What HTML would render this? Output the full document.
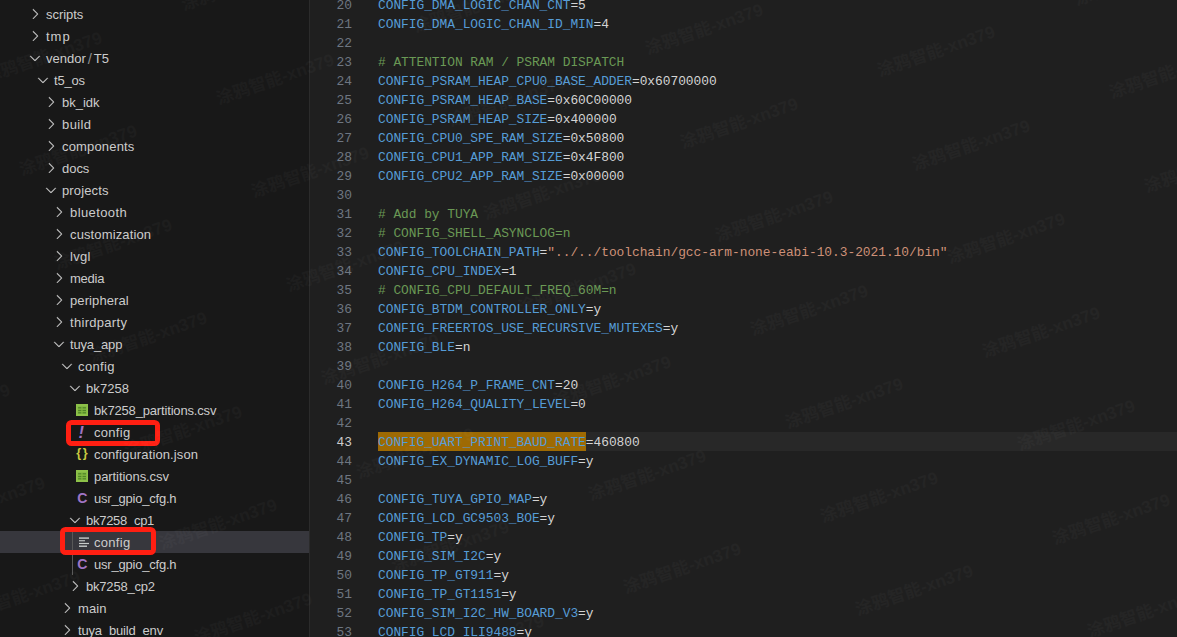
<!DOCTYPE html><html><head><meta charset="utf-8"><title>config</title><style>
html,body{margin:0;padding:0;background:#1f1f1f;}
body{width:1177px;height:637px;overflow:hidden;position:relative;font-family:"Liberation Sans","Noto Sans CJK SC",sans-serif;}
#sb{position:absolute;left:0;top:0;width:309px;height:637px;background:#181818;border-right:1px solid #2b2b2b;overflow:hidden;}
.row{position:absolute;left:0;width:309px;height:22px;line-height:22px;color:#cccccc;font-size:13px;white-space:nowrap;}
.row.sel{background:#37373d;}
.row .lbl{position:absolute;top:1px;}
.row svg{position:absolute;}
.sep{color:#8b8b8b;margin:0 1.9px;font-size:15px;line-height:1;position:relative;top:0.5px;}
#ed{position:absolute;left:310px;top:0;width:867px;height:637px;background:#1f1f1f;overflow:hidden;}
.ln{position:absolute;left:0;width:867px;height:19px;line-height:19px;font-family:"Liberation Mono","DejaVu Sans Mono",monospace;font-size:12.9px;letter-spacing:-0.040px;white-space:pre;color:#d4d4d4;}
.ln.cur{background:linear-gradient(#282828,#282828) no-repeat 68px 0;}
.ln .n{position:absolute;left:0;top:1px;width:42px;text-align:right;color:#6e7681;}
.ln.cur .n{color:#cccccc;}
.ln .t{position:absolute;left:68px;top:1px;height:19px;}
.k{color:#569cd6;} .c{color:#6a9955;} .s{color:#ce9178;} .v{color:#d4d4d4;}
.kh{color:#569cd6;position:relative;}
.hl{position:absolute;left:68px;top:0;width:208px;height:19px;background:#9e6a03;}
.box{position:absolute;border:5.6px solid #ff1f12;border-radius:5.5px;box-sizing:border-box;}
.guide{position:absolute;width:1px;background:#585858;}
.wm{position:absolute;width:200px;height:24px;line-height:24px;text-align:center;color:#ffffff;opacity:0.024;font-size:17.2px;font-weight:bold;white-space:nowrap;transform:rotate(-19deg);transform-origin:center;pointer-events:none;font-family:"Liberation Sans","Noto Sans CJK SC",sans-serif;}
</style></head><body>
<div id="sb">
<div class="row" style="top:3px"><svg style="left:27px;top:3px" width="16" height="16" viewBox="0 0 16 16"><path d="M10.072 8.024L5.715 3.667l.618-.62L11 7.716v.618L6.333 13l-.618-.619 4.357-4.357z" fill="#d0d0d0" stroke="#d0d0d0" stroke-width="0.2"/></svg><span class="lbl" style="left:46px;letter-spacing:-0.033px">scripts</span></div>
<div class="row" style="top:25px"><svg style="left:27px;top:3px" width="16" height="16" viewBox="0 0 16 16"><path d="M10.072 8.024L5.715 3.667l.618-.62L11 7.716v.618L6.333 13l-.618-.619 4.357-4.357z" fill="#d0d0d0" stroke="#d0d0d0" stroke-width="0.2"/></svg><span class="lbl" style="left:46px;letter-spacing:1.000px">tmp</span></div>
<div class="row" style="top:47px"><svg style="left:27px;top:3px" width="16" height="16" viewBox="0 0 16 16"><path d="M7.976 10.072l4.357-4.357.62.618L8.284 11h-.618L3 6.333l.619-.618 4.357 4.357z" fill="#d0d0d0" stroke="#d0d0d0" stroke-width="0.2"/></svg><span class="lbl" style="left:46px">vendor<span class="sep">/</span>T5</span></div>
<div class="row" style="top:69px"><svg style="left:35px;top:3px" width="16" height="16" viewBox="0 0 16 16"><path d="M7.976 10.072l4.357-4.357.62.618L8.284 11h-.618L3 6.333l.619-.618 4.357 4.357z" fill="#d0d0d0" stroke="#d0d0d0" stroke-width="0.2"/></svg><span class="lbl" style="left:54px;letter-spacing:-0.225px">t5_os</span></div>
<div class="row" style="top:91px"><svg style="left:43px;top:3px" width="16" height="16" viewBox="0 0 16 16"><path d="M10.072 8.024L5.715 3.667l.618-.62L11 7.716v.618L6.333 13l-.618-.619 4.357-4.357z" fill="#d0d0d0" stroke="#d0d0d0" stroke-width="0.2"/></svg><span class="lbl" style="left:62px">bk_idk</span></div>
<div class="row" style="top:113px"><svg style="left:43px;top:3px" width="16" height="16" viewBox="0 0 16 16"><path d="M10.072 8.024L5.715 3.667l.618-.62L11 7.716v.618L6.333 13l-.618-.619 4.357-4.357z" fill="#d0d0d0" stroke="#d0d0d0" stroke-width="0.2"/></svg><span class="lbl" style="left:62px;letter-spacing:0.400px">build</span></div>
<div class="row" style="top:135px"><svg style="left:43px;top:3px" width="16" height="16" viewBox="0 0 16 16"><path d="M10.072 8.024L5.715 3.667l.618-.62L11 7.716v.618L6.333 13l-.618-.619 4.357-4.357z" fill="#d0d0d0" stroke="#d0d0d0" stroke-width="0.2"/></svg><span class="lbl" style="left:62px;letter-spacing:0.167px">components</span></div>
<div class="row" style="top:157px"><svg style="left:43px;top:3px" width="16" height="16" viewBox="0 0 16 16"><path d="M10.072 8.024L5.715 3.667l.618-.62L11 7.716v.618L6.333 13l-.618-.619 4.357-4.357z" fill="#d0d0d0" stroke="#d0d0d0" stroke-width="0.2"/></svg><span class="lbl" style="left:62px;letter-spacing:-0.033px">docs</span></div>
<div class="row" style="top:179px"><svg style="left:43px;top:3px" width="16" height="16" viewBox="0 0 16 16"><path d="M7.976 10.072l4.357-4.357.62.618L8.284 11h-.618L3 6.333l.619-.618 4.357 4.357z" fill="#d0d0d0" stroke="#d0d0d0" stroke-width="0.2"/></svg><span class="lbl" style="left:62px;letter-spacing:0.143px">projects</span></div>
<div class="row" style="top:201px"><svg style="left:51px;top:3px" width="16" height="16" viewBox="0 0 16 16"><path d="M10.072 8.024L5.715 3.667l.618-.62L11 7.716v.618L6.333 13l-.618-.619 4.357-4.357z" fill="#d0d0d0" stroke="#d0d0d0" stroke-width="0.2"/></svg><span class="lbl" style="left:70px;letter-spacing:0.400px">bluetooth</span></div>
<div class="row" style="top:223px"><svg style="left:51px;top:3px" width="16" height="16" viewBox="0 0 16 16"><path d="M10.072 8.024L5.715 3.667l.618-.62L11 7.716v.618L6.333 13l-.618-.619 4.357-4.357z" fill="#d0d0d0" stroke="#d0d0d0" stroke-width="0.2"/></svg><span class="lbl" style="left:70px;letter-spacing:0.125px">customization</span></div>
<div class="row" style="top:245px"><svg style="left:51px;top:3px" width="16" height="16" viewBox="0 0 16 16"><path d="M10.072 8.024L5.715 3.667l.618-.62L11 7.716v.618L6.333 13l-.618-.619 4.357-4.357z" fill="#d0d0d0" stroke="#d0d0d0" stroke-width="0.2"/></svg><span class="lbl" style="left:70px;letter-spacing:0.267px">lvgl</span></div>
<div class="row" style="top:267px"><svg style="left:51px;top:3px" width="16" height="16" viewBox="0 0 16 16"><path d="M10.072 8.024L5.715 3.667l.618-.62L11 7.716v.618L6.333 13l-.618-.619 4.357-4.357z" fill="#d0d0d0" stroke="#d0d0d0" stroke-width="0.2"/></svg><span class="lbl" style="left:70px;letter-spacing:-0.250px">media</span></div>
<div class="row" style="top:289px"><svg style="left:51px;top:3px" width="16" height="16" viewBox="0 0 16 16"><path d="M10.072 8.024L5.715 3.667l.618-.62L11 7.716v.618L6.333 13l-.618-.619 4.357-4.357z" fill="#d0d0d0" stroke="#d0d0d0" stroke-width="0.2"/></svg><span class="lbl" style="left:70px;letter-spacing:0.100px">peripheral</span></div>
<div class="row" style="top:311px"><svg style="left:51px;top:3px" width="16" height="16" viewBox="0 0 16 16"><path d="M10.072 8.024L5.715 3.667l.618-.62L11 7.716v.618L6.333 13l-.618-.619 4.357-4.357z" fill="#d0d0d0" stroke="#d0d0d0" stroke-width="0.2"/></svg><span class="lbl" style="left:70px;letter-spacing:0.300px">thirdparty</span></div>
<div class="row" style="top:333px"><svg style="left:51px;top:3px" width="16" height="16" viewBox="0 0 16 16"><path d="M7.976 10.072l4.357-4.357.62.618L8.284 11h-.618L3 6.333l.619-.618 4.357 4.357z" fill="#d0d0d0" stroke="#d0d0d0" stroke-width="0.2"/></svg><span class="lbl" style="left:70px;letter-spacing:-0.157px">tuya_app</span></div>
<div class="row" style="top:355px"><svg style="left:59px;top:3px" width="16" height="16" viewBox="0 0 16 16"><path d="M7.976 10.072l4.357-4.357.62.618L8.284 11h-.618L3 6.333l.619-.618 4.357 4.357z" fill="#d0d0d0" stroke="#d0d0d0" stroke-width="0.2"/></svg><span class="lbl" style="left:78px;letter-spacing:0.380px">config</span></div>
<div class="row" style="top:377px"><svg style="left:67px;top:3px" width="16" height="16" viewBox="0 0 16 16"><path d="M7.976 10.072l4.357-4.357.62.618L8.284 11h-.618L3 6.333l.619-.618 4.357 4.357z" fill="#d0d0d0" stroke="#d0d0d0" stroke-width="0.2"/></svg><span class="lbl" style="left:86px;letter-spacing:0.080px">bk7258</span></div>
<div class="row" style="top:399px"><svg style="left:76px;top:4.8px" width="12.3" height="12.2" viewBox="0 0 12.3 12.2"><rect x="0" y="0" width="12.3" height="12.2" fill="#8dc149"/><rect x="1.6" y="2.4" width="9" height="7.6" fill="#7fb53f"/><rect x="2.1" y="3.2" width="3.2" height="1.2" fill="#4f8427"/><rect x="2.1" y="5.9" width="3.2" height="1.2" fill="#4f8427"/><rect x="2.1" y="8.2" width="3.2" height="1.2" fill="#4f8427"/><rect x="6.6" y="3.2" width="3.4" height="1.2" fill="#4f8427"/><rect x="6.6" y="5.9" width="3.4" height="1.2" fill="#4f8427"/><rect x="6.6" y="8.2" width="3.4" height="1.2" fill="#4f8427"/></svg><span class="lbl" style="left:94px;letter-spacing:-0.165px">bk7258_partitions.csv</span></div>
<div class="row" style="top:421px"><span class="lbl ic" style="left:78.6px;top:0px;color:#a074c4;font-weight:bold;font-style:italic;font-size:16.5px">!</span><span class="lbl" style="left:94px;letter-spacing:0.300px">config</span></div>
<div class="row" style="top:443px"><span class="lbl ic" style="left:76.2px;top:-0.8px;color:#cbcb41;font-weight:bold;font-size:12.6px;letter-spacing:1.7px">{}</span><span class="lbl" style="left:94px;letter-spacing:0.129px">configuration.json</span></div>
<div class="row" style="top:465px"><svg style="left:76px;top:4.8px" width="12.3" height="12.2" viewBox="0 0 12.3 12.2"><rect x="0" y="0" width="12.3" height="12.2" fill="#8dc149"/><rect x="1.6" y="2.4" width="9" height="7.6" fill="#7fb53f"/><rect x="2.1" y="3.2" width="3.2" height="1.2" fill="#4f8427"/><rect x="2.1" y="5.9" width="3.2" height="1.2" fill="#4f8427"/><rect x="2.1" y="8.2" width="3.2" height="1.2" fill="#4f8427"/><rect x="6.6" y="3.2" width="3.4" height="1.2" fill="#4f8427"/><rect x="6.6" y="5.9" width="3.4" height="1.2" fill="#4f8427"/><rect x="6.6" y="8.2" width="3.4" height="1.2" fill="#4f8427"/></svg><span class="lbl" style="left:94px;letter-spacing:-0.069px">partitions.csv</span></div>
<div class="row" style="top:487px"><span class="lbl ic" style="left:77.2px;top:0px;color:#a074c4;font-weight:bold;font-size:14.1px">C</span><span class="lbl" style="left:94px;letter-spacing:-0.208px">usr_gpio_cfg.h</span></div>
<div class="row" style="top:509px"><svg style="left:67px;top:3px" width="16" height="16" viewBox="0 0 16 16"><path d="M7.976 10.072l4.357-4.357.62.618L8.284 11h-.618L3 6.333l.619-.618 4.357 4.357z" fill="#d0d0d0" stroke="#d0d0d0" stroke-width="0.2"/></svg><span class="lbl" style="left:86px;letter-spacing:-0.278px">bk7258_cp1</span></div>
<div class="row sel" style="top:531px"><svg style="left:79px;top:6px" width="10" height="11" viewBox="0 0 10 11"><rect x="0" y="0.4" width="10" height="1.4" fill="#c8cbca"/><rect x="0" y="3.2" width="6" height="1.1" fill="#c8cbca"/><rect x="0" y="5.9" width="10" height="1.2" fill="#c8cbca"/><rect x="0" y="8.5" width="8" height="1.4" fill="#c8cbca"/></svg><span class="lbl" style="left:94px;letter-spacing:0.300px">config</span></div>
<div class="row" style="top:553px"><span class="lbl ic" style="left:77.2px;top:0px;color:#a074c4;font-weight:bold;font-size:14.1px">C</span><span class="lbl" style="left:94px;letter-spacing:-0.208px">usr_gpio_cfg.h</span></div>
<div class="row" style="top:575px"><svg style="left:67px;top:3px" width="16" height="16" viewBox="0 0 16 16"><path d="M10.072 8.024L5.715 3.667l.618-.62L11 7.716v.618L6.333 13l-.618-.619 4.357-4.357z" fill="#d0d0d0" stroke="#d0d0d0" stroke-width="0.2"/></svg><span class="lbl" style="left:86px;letter-spacing:-0.200px">bk7258_cp2</span></div>
<div class="row" style="top:597px"><svg style="left:59px;top:3px" width="16" height="16" viewBox="0 0 16 16"><path d="M10.072 8.024L5.715 3.667l.618-.62L11 7.716v.618L6.333 13l-.618-.619 4.357-4.357z" fill="#d0d0d0" stroke="#d0d0d0" stroke-width="0.2"/></svg><span class="lbl" style="left:78px;letter-spacing:0.100px">main</span></div>
<div class="row" style="top:619px"><svg style="left:59px;top:3px" width="16" height="16" viewBox="0 0 16 16"><path d="M10.072 8.024L5.715 3.667l.618-.62L11 7.716v.618L6.333 13l-.618-.619 4.357-4.357z" fill="#d0d0d0" stroke="#d0d0d0" stroke-width="0.2"/></svg><span class="lbl" style="left:78px;letter-spacing:-0.177px">tuya_build_env</span></div>
<div class="guide" style="left:72px;top:531px;height:44px"></div>
<div class="box" style="left:66.4px;top:420.3px;width:94.1px;height:25.3px"></div>
<div class="box" style="left:59.7px;top:527.3px;width:96.8px;height:28.2px"></div>
</div>
<div id="ed">
<div class="ln" style="top:-5px"><span class="n">20</span><span class="t"><span class="k">CONFIG_DMA_LOGIC_CHAN_CNT</span><span class="v">=5</span></span></div>
<div class="ln" style="top:14px"><span class="n">21</span><span class="t"><span class="k">CONFIG_DMA_LOGIC_CHAN_ID_MIN</span><span class="v">=4</span></span></div>
<div class="ln" style="top:33px"><span class="n">22</span><span class="t"></span></div>
<div class="ln" style="top:52px"><span class="n">23</span><span class="t"><span class="c"># ATTENTION RAM / PSRAM DISPATCH</span></span></div>
<div class="ln" style="top:71px"><span class="n">24</span><span class="t"><span class="k">CONFIG_PSRAM_HEAP_CPU0_BASE_ADDER</span><span class="v">=0x60700000</span></span></div>
<div class="ln" style="top:90px"><span class="n">25</span><span class="t"><span class="k">CONFIG_PSRAM_HEAP_BASE</span><span class="v">=0x60C00000</span></span></div>
<div class="ln" style="top:109px"><span class="n">26</span><span class="t"><span class="k">CONFIG_PSRAM_HEAP_SIZE</span><span class="v">=0x400000</span></span></div>
<div class="ln" style="top:128px"><span class="n">27</span><span class="t"><span class="k">CONFIG_CPU0_SPE_RAM_SIZE</span><span class="v">=0x50800</span></span></div>
<div class="ln" style="top:147px"><span class="n">28</span><span class="t"><span class="k">CONFIG_CPU1_APP_RAM_SIZE</span><span class="v">=0x4F800</span></span></div>
<div class="ln" style="top:166px"><span class="n">29</span><span class="t"><span class="k">CONFIG_CPU2_APP_RAM_SIZE</span><span class="v">=0x00000</span></span></div>
<div class="ln" style="top:185px"><span class="n">30</span><span class="t"></span></div>
<div class="ln" style="top:204px"><span class="n">31</span><span class="t"><span class="c"># Add by TUYA</span></span></div>
<div class="ln" style="top:223px"><span class="n">32</span><span class="t"><span class="c"># CONFIG_SHELL_ASYNCLOG=n</span></span></div>
<div class="ln" style="top:242px"><span class="n">33</span><span class="t"><span class="k">CONFIG_TOOLCHAIN_PATH</span><span class="v">=</span><span class="s">&quot;../../toolchain/gcc-arm-none-eabi-10.3-2021.10/bin&quot;</span></span></div>
<div class="ln" style="top:261px"><span class="n">34</span><span class="t"><span class="k">CONFIG_CPU_INDEX</span><span class="v">=1</span></span></div>
<div class="ln" style="top:280px"><span class="n">35</span><span class="t"><span class="c"># CONFIG_CPU_DEFAULT_FREQ_60M=n</span></span></div>
<div class="ln" style="top:299px"><span class="n">36</span><span class="t"><span class="k">CONFIG_BTDM_CONTROLLER_ONLY</span><span class="v">=y</span></span></div>
<div class="ln" style="top:318px"><span class="n">37</span><span class="t"><span class="k">CONFIG_FREERTOS_USE_RECURSIVE_MUTEXES</span><span class="v">=y</span></span></div>
<div class="ln" style="top:337px"><span class="n">38</span><span class="t"><span class="k">CONFIG_BLE</span><span class="v">=n</span></span></div>
<div class="ln" style="top:356px"><span class="n">39</span><span class="t"></span></div>
<div class="ln" style="top:375px"><span class="n">40</span><span class="t"><span class="k">CONFIG_H264_P_FRAME_CNT</span><span class="v">=20</span></span></div>
<div class="ln" style="top:394px"><span class="n">41</span><span class="t"><span class="k">CONFIG_H264_QUALITY_LEVEL</span><span class="v">=0</span></span></div>
<div class="ln" style="top:413px"><span class="n">42</span><span class="t"></span></div>
<div class="ln cur" style="top:432px"><span class="hl"></span><span class="n">43</span><span class="t"><span class="kh">CONFIG_UART_PRINT_BAUD_RATE</span><span class="v">=460800</span></span></div>
<div class="ln" style="top:451px"><span class="n">44</span><span class="t"><span class="k">CONFIG_EX_DYNAMIC_LOG_BUFF</span><span class="v">=y</span></span></div>
<div class="ln" style="top:470px"><span class="n">45</span><span class="t"></span></div>
<div class="ln" style="top:489px"><span class="n">46</span><span class="t"><span class="k">CONFIG_TUYA_GPIO_MAP</span><span class="v">=y</span></span></div>
<div class="ln" style="top:508px"><span class="n">47</span><span class="t"><span class="k">CONFIG_LCD_GC9503_BOE</span><span class="v">=y</span></span></div>
<div class="ln" style="top:527px"><span class="n">48</span><span class="t"><span class="k">CONFIG_TP</span><span class="v">=y</span></span></div>
<div class="ln" style="top:546px"><span class="n">49</span><span class="t"><span class="k">CONFIG_SIM_I2C</span><span class="v">=y</span></span></div>
<div class="ln" style="top:565px"><span class="n">50</span><span class="t"><span class="k">CONFIG_TP_GT911</span><span class="v">=y</span></span></div>
<div class="ln" style="top:584px"><span class="n">51</span><span class="t"><span class="k">CONFIG_TP_GT1151</span><span class="v">=y</span></span></div>
<div class="ln" style="top:603px"><span class="n">52</span><span class="t"><span class="k">CONFIG_SIM_I2C_HW_BOARD_V3</span><span class="v">=y</span></span></div>
<div class="ln" style="top:622px"><span class="n">53</span><span class="t"><span class="k">CONFIG_LCD_ILI9488</span><span class="v">=y</span></span></div>
</div>
<div class="wm" style="left:-149.0px;top:396.5px">涂鸦智能-xn379</div>
<div class="wm" style="left:-114.0px;top:490.0px">涂鸦智能-xn379</div>
<div class="wm" style="left:-79.0px;top:583.5px">涂鸦智能-xn379</div>
<div class="wm" style="left:-57.0px;top:44.5px">涂鸦智能-xn379</div>
<div class="wm" style="left:-22.0px;top:138.0px">涂鸦智能-xn379</div>
<div class="wm" style="left:13.0px;top:231.5px">涂鸦智能-xn379</div>
<div class="wm" style="left:48.0px;top:325.0px">涂鸦智能-xn379</div>
<div class="wm" style="left:83.0px;top:418.5px">涂鸦智能-xn379</div>
<div class="wm" style="left:118.0px;top:512.0px">涂鸦智能-xn379</div>
<div class="wm" style="left:153.0px;top:605.5px">涂鸦智能-xn379</div>
<div class="wm" style="left:140.0px;top:-27.0px">涂鸦智能-xn379</div>
<div class="wm" style="left:175.0px;top:66.5px">涂鸦智能-xn379</div>
<div class="wm" style="left:210.0px;top:160.0px">涂鸦智能-xn379</div>
<div class="wm" style="left:245.0px;top:253.5px">涂鸦智能-xn379</div>
<div class="wm" style="left:280.0px;top:347.0px">涂鸦智能-xn379</div>
<div class="wm" style="left:315.0px;top:440.5px">涂鸦智能-xn379</div>
<div class="wm" style="left:350.0px;top:534.0px">涂鸦智能-xn379</div>
<div class="wm" style="left:385.0px;top:627.5px">涂鸦智能-xn379</div>
<div class="wm" style="left:372.0px;top:-5.0px">涂鸦智能-xn379</div>
<div class="wm" style="left:407.0px;top:88.5px">涂鸦智能-xn379</div>
<div class="wm" style="left:442.0px;top:182.0px">涂鸦智能-xn379</div>
<div class="wm" style="left:477.0px;top:275.5px">涂鸦智能-xn379</div>
<div class="wm" style="left:512.0px;top:369.0px">涂鸦智能-xn379</div>
<div class="wm" style="left:547.0px;top:462.5px">涂鸦智能-xn379</div>
<div class="wm" style="left:582.0px;top:556.0px">涂鸦智能-xn379</div>
<div class="wm" style="left:617.0px;top:649.5px">涂鸦智能-xn379</div>
<div class="wm" style="left:604.0px;top:17.0px">涂鸦智能-xn379</div>
<div class="wm" style="left:639.0px;top:110.5px">涂鸦智能-xn379</div>
<div class="wm" style="left:674.0px;top:204.0px">涂鸦智能-xn379</div>
<div class="wm" style="left:709.0px;top:297.5px">涂鸦智能-xn379</div>
<div class="wm" style="left:744.0px;top:391.0px">涂鸦智能-xn379</div>
<div class="wm" style="left:779.0px;top:484.5px">涂鸦智能-xn379</div>
<div class="wm" style="left:814.0px;top:578.0px">涂鸦智能-xn379</div>
<div class="wm" style="left:836.0px;top:39.0px">涂鸦智能-xn379</div>
<div class="wm" style="left:871.0px;top:132.5px">涂鸦智能-xn379</div>
<div class="wm" style="left:906.0px;top:226.0px">涂鸦智能-xn379</div>
<div class="wm" style="left:941.0px;top:319.5px">涂鸦智能-xn379</div>
<div class="wm" style="left:976.0px;top:413.0px">涂鸦智能-xn379</div>
<div class="wm" style="left:1011.0px;top:506.5px">涂鸦智能-xn379</div>
<div class="wm" style="left:1046.0px;top:600.0px">涂鸦智能-xn379</div>
<div class="wm" style="left:1033.0px;top:-32.5px">涂鸦智能-xn379</div>
<div class="wm" style="left:1068.0px;top:61.0px">涂鸦智能-xn379</div>
<div class="wm" style="left:1103.0px;top:154.5px">涂鸦智能-xn379</div>
<div class="wm" style="left:1138.0px;top:248.0px">涂鸦智能-xn379</div>
</body></html>
